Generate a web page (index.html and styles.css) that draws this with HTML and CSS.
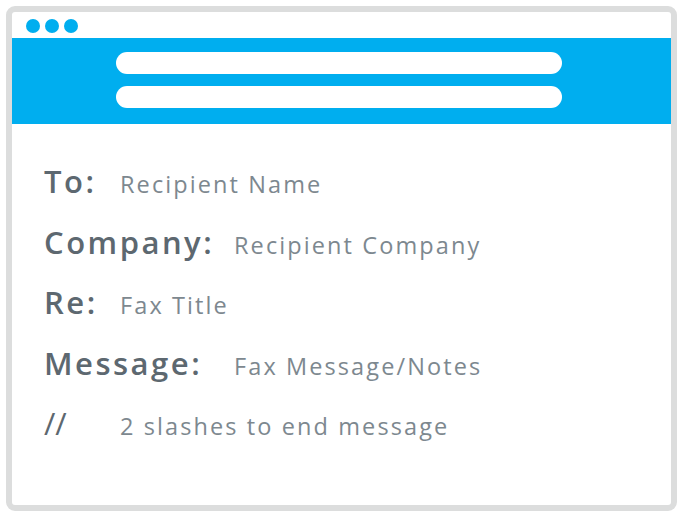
FILE: index.html
```html
<!DOCTYPE html>
<html>
<head>
<meta charset="utf-8">
<link rel="stylesheet" href="styles.css">
</head>
<body>
<div class="window">
  <div class="titlebar">
    <span class="dot"></span><span class="dot"></span><span class="dot"></span>
  </div>
  <div class="banner">
    <div class="bar"></div>
    <div class="bar"></div>
  </div>
  <div class="fields">
    <div class="row"><span class="label">To:</span><span class="value">Recipient Name</span></div>
    <div class="row"><span class="label wide">Company:</span><span class="value">Recipient Company</span></div>
    <div class="row"><span class="label">Re:</span><span class="value">Fax Title</span></div>
    <div class="row"><span class="label wide">Message:</span><span class="value">Fax Message/Notes</span></div>
    <div class="row"><span class="label slash">//</span><span class="value">2 slashes to end message</span></div>
  </div>
</div>
</body>
</html>
```

FILE: styles.css
```css
* { box-sizing: border-box; }
html, body { margin: 0; padding: 0; background: #ffffff; }
body {
  width: 682px;
  height: 518px;
  padding: 6px 5px 7px 6px;
  font-family: "Open Sans", Lato, sans-serif;
}
.window {
  height: 505px;
  border: 6px solid #dcdddd;
  border-radius: 9px;
  background: #ffffff;
  overflow: hidden;
  display: flex;
  flex-direction: column;
}
.titlebar {
  height: 26px;
  display: flex;
  align-items: center;
  gap: 5px;
  padding-left: 14px;
  padding-top: 2px;
}
.dot {
  width: 14px;
  height: 14px;
  border-radius: 50%;
  background: #00aeef;
}
.banner {
  height: 86px;
  background: #00aeef;
  display: flex;
  flex-direction: column;
  align-items: center;
  padding-top: 14px;
  gap: 12px;
  padding-right: 5px;
}
.bar {
  width: 446px;
  height: 22px;
  border-radius: 11px;
  background: #ffffff;
}
.fields {
  padding: 36px 0 0 32px;
  display: flex;
  flex-direction: column;
}
.row {
  height: 60.5px;
  display: flex;
  align-items: baseline;
}
.label {
  min-width: 76px;
  font-size: 31px;
  font-weight: 600;
  letter-spacing: 2.5px;
  color: #5d6870;
}
.label.wide { min-width: 190px; }
.label.slash { font-weight: 400; letter-spacing: 0; }
.value {
  font-size: 23.5px;
  font-weight: 400;
  letter-spacing: 2.1px;
  color: #7d888f;
}
```
